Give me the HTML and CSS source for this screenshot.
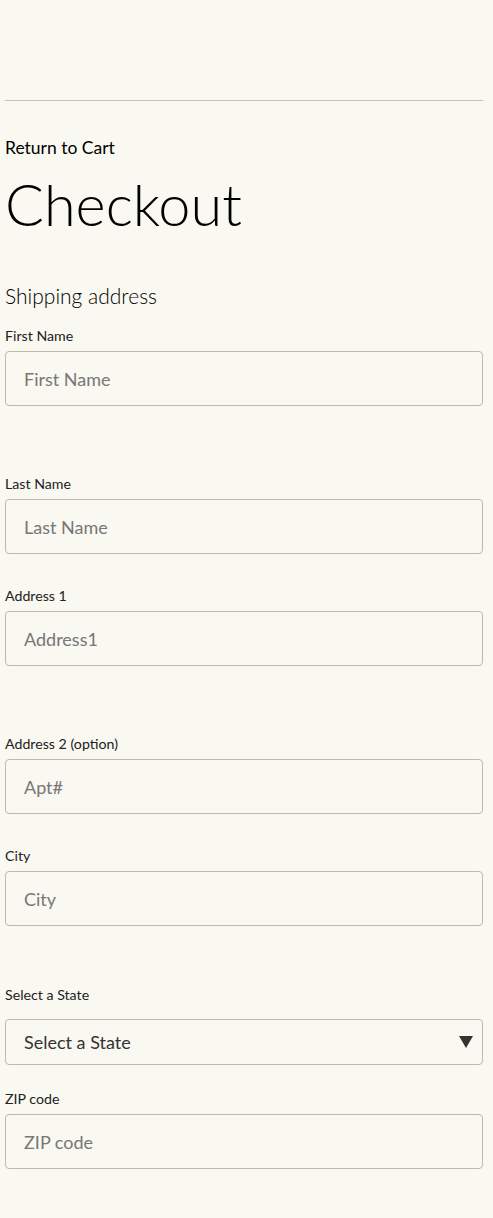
FILE: index.html
```html
<!DOCTYPE html>
<html>
<head>
<meta charset="utf-8">
<link rel="stylesheet" href="styles.css">
</head>
<body>
<header class="topbar"></header>
<main class="page">
  <hr class="rule">
  <a class="back-link" href="#">Return to Cart</a>
  <h1 class="title">Checkout</h1>
  <h2 class="section-title">Shipping address</h2>
  <form class="form">
    <div class="field field--wide">
      <label class="label">First Name</label>
      <input class="input" type="text" placeholder="First Name">
    </div>
    <div class="field">
      <label class="label">Last Name</label>
      <input class="input" type="text" placeholder="Last Name">
    </div>
    <div class="field field--wide">
      <label class="label">Address 1</label>
      <input class="input" type="text" placeholder="Address1">
    </div>
    <div class="field">
      <label class="label">Address 2 (option)</label>
      <input class="input" type="text" placeholder="Apt#">
    </div>
    <div class="field field--mid">
      <label class="label">City</label>
      <input class="input" type="text" placeholder="City">
    </div>
    <div class="field field--select">
      <label class="label">Select a State</label>
      <div class="select-wrap">
        <select class="select">
          <option>Select a State</option>
        </select>
        <svg class="select-arrow" width="14" height="12" viewBox="0 0 14 12"><polygon points="0,0 14,0 7,12" fill="#333"/></svg>
      </div>
    </div>
    <div class="field">
      <label class="label">ZIP code</label>
      <input class="input" type="text" placeholder="ZIP code">
    </div>
  </form>
</main>
</body>
</html>
```
FILE: styles.css
```css
* { box-sizing: border-box; }
html, body {
  margin: 0;
  padding: 0;
  background: #f9f8f1;
  font-family: "Lato", "Liberation Sans", sans-serif;
  color: #000;
}
.topbar { height: 100px; }
.page {
  padding: 0 10px 0 5px;
}
.rule {
  margin: 0;
  border: 0;
  border-top: 1px solid #c5c3b2;
}
.back-link {
  display: block;
  margin-top: 37px;
  font-size: 17.5px;
  line-height: 20px;
  color: #000;
  text-decoration: none;
}
.title {
  margin: 11px 0 0 0;
  font-size: 57.6px;
  font-weight: 300;
  line-height: 70px;
}
.section-title {
  margin: 44px 0 0 0;
  font-size: 21px;
  font-weight: 300;
  line-height: 26px;
}
.form {
  display: flex;
  flex-direction: column;
  margin-top: 18px;
}
.field {
  display: flex;
  flex-direction: column;
  margin-bottom: 33px;
}
.field--wide { margin-bottom: 69px; }
.field--mid { margin-bottom: 60px; }
.field--select { margin-bottom: 25px; }
.label {
  font-size: 14.2px;
  line-height: 17px;
  margin-bottom: 7px;
  color: #222;
}
.field--select .label { margin-bottom: 16px; }
.input {
  height: 55px;
  border: 1px solid #bcbaa8;
  border-radius: 4px;
  background: #f9f8f1;
  padding: 0 18px;
  font-family: inherit;
  font-size: 18px;
  color: #333;
  outline: none;
}
.input::placeholder { color: #777; }
.select-wrap { position: relative; }
.select {
  width: 100%;
  height: 46px;
  border: 1px solid #bcbaa8;
  border-radius: 4px;
  background: #f9f8f1;
  padding: 0 18px;
  font-family: inherit;
  font-size: 18px;
  color: #333;
  -webkit-appearance: none;
  appearance: none;
  outline: none;
}
.select-arrow {
  position: absolute;
  right: 10px;
  top: 17px;
  pointer-events: none;
}
```
